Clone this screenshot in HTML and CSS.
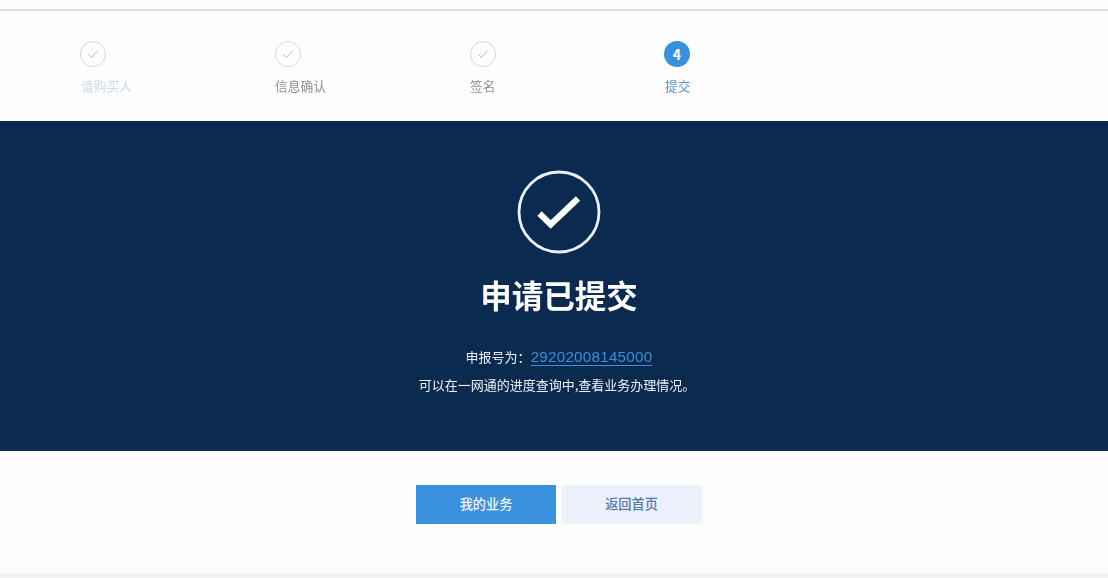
FILE: index.html
```html
<!DOCTYPE html>
<html lang="zh-CN">
<head>
<meta charset="utf-8">
<title>申请已提交</title>
<link rel="stylesheet" href="styles.css">
</head>
<body>
<div class="page">
  <div class="topbar"></div>
  <ol class="steps">
    <li class="step step-first">
      <span class="dot"><svg width="14" height="14" viewBox="0 0 14 14"><path d="M2.5 7.5 5.6 10.4 11.5 3.8" fill="none" stroke="#b4b8c0" stroke-width="1"/></svg></span>
      <span class="label">请购买人</span>
    </li>
    <li class="step">
      <span class="dot"><svg width="14" height="14" viewBox="0 0 14 14"><path d="M2.5 7.5 5.6 10.4 11.5 3.8" fill="none" stroke="#b4b8c0" stroke-width="1"/></svg></span>
      <span class="label">信息确认</span>
    </li>
    <li class="step">
      <span class="dot"><svg width="14" height="14" viewBox="0 0 14 14"><path d="M2.5 7.5 5.6 10.4 11.5 3.8" fill="none" stroke="#b4b8c0" stroke-width="1"/></svg></span>
      <span class="label">签名</span>
    </li>
    <li class="step step-current">
      <span class="dot">4</span>
      <span class="label">提交</span>
    </li>
  </ol>
  <section class="banner">
    <svg class="success" width="84" height="84" viewBox="0 0 84 84">
      <circle cx="42" cy="42" r="40" fill="none" stroke="#eaf0f6" stroke-width="2.8"/>
      <path d="M22.5 43.5 33.7 54.5 61 28.5" fill="none" stroke="#ffffff" stroke-width="6.2"/>
    </svg>
    <h1 class="title">申请已提交</h1>
    <p class="number">申报号为：<a class="number-link">29202008145000</a></p>
    <p class="hint">可以在一网通的进度查询中,查看业务办理情况。</p>
  </section>
  <div class="actions">
    <button class="btn btn-primary">我的业务</button>
    <button class="btn btn-secondary">返回首页</button>
  </div>
  <div class="bottombar"></div>
</div>
</body>
</html>
```
FILE: styles.css
```css
* { box-sizing: border-box; }
html, body { margin: 0; padding: 0; }
body {
  width: 1108px;
  height: 578px;
  overflow: hidden;
  background: #fdfdfe;
  font-family: "Noto Sans CJK SC", "Liberation Sans", sans-serif;
}
.page { display: flex; flex-direction: column; height: 578px; }
.topbar { height: 11px; flex: none; background: #fcfcfd; border-bottom: 2px solid #dcdcdf; }
.steps {
  list-style: none;
  margin: 0;
  padding: 30px 0 0 80px;
  height: 110px;
  flex: none;
  display: flex;
}
.step { width: 195px; display: flex; flex-direction: column; align-items: flex-start; }
.dot {
  width: 26px;
  height: 26px;
  border: 1px solid #d6d8dc;
  border-radius: 50%;
  display: flex;
  align-items: center;
  justify-content: center;
}
.label {
  margin-top: 10px;
  font-size: 12.75px;
  line-height: 18px;
  color: #8f9296;
  filter: blur(0.4px);
}
.step-first .label { margin-left: 1px; color: #c9d9ee; }
.step-current { margin-left: -1px; }
.step-current .dot {
  background: #3a90dc;
  border: 0;
  color: #fff;
  font-size: 14px;
  font-weight: 700;
}
.step-current .label { margin-left: 1px; color: #5d95d6; }
.banner {
  height: 330px;
  flex: none;
  background: #0a2a50;
  display: flex;
  flex-direction: column;
  align-items: center;
  padding: 49px 0 0 10px;
}
.success { display: block; }
.title {
  margin: 17px 0 0;
  font-size: 31.5px;
  line-height: 46px;
  font-weight: 700;
  color: #fff;
  filter: blur(0.3px);
}
.number {
  margin: 30px 0 0;
  font-size: 13px;
  line-height: 20px;
  color: #eef2f6;
  filter: blur(0.35px);
}
.number-link {
  font-size: 15.2px;
  letter-spacing: 0.25px;
  color: #3c8fd8;
  border-bottom: 1px solid #3c8fd8;
  font-family: "Liberation Sans", sans-serif;
}
.hint {
  margin: 8px 4px 0 0;
  font-size: 13px;
  line-height: 20px;
  color: #eef2f6;
  filter: blur(0.35px);
}
.actions {
  flex: 1;
  display: flex;
  justify-content: center;
  align-items: flex-start;
  gap: 5px;
  padding: 34px 0 0 10px;
}
.btn {
  height: 39px;
  border: 0;
  padding: 0 0 2px;
  font-family: inherit;
  font-size: 13.2px;
  font-weight: 500;
}
.btn-primary { width: 140px; background: #3a91dd; color: #f2f7fc; }
.btn-secondary { width: 141px; background: #ebf0fa; color: #5478ad; border-radius: 5px; }
.bottombar { height: 5px; flex: none; background: #f3f3f5; }
```
